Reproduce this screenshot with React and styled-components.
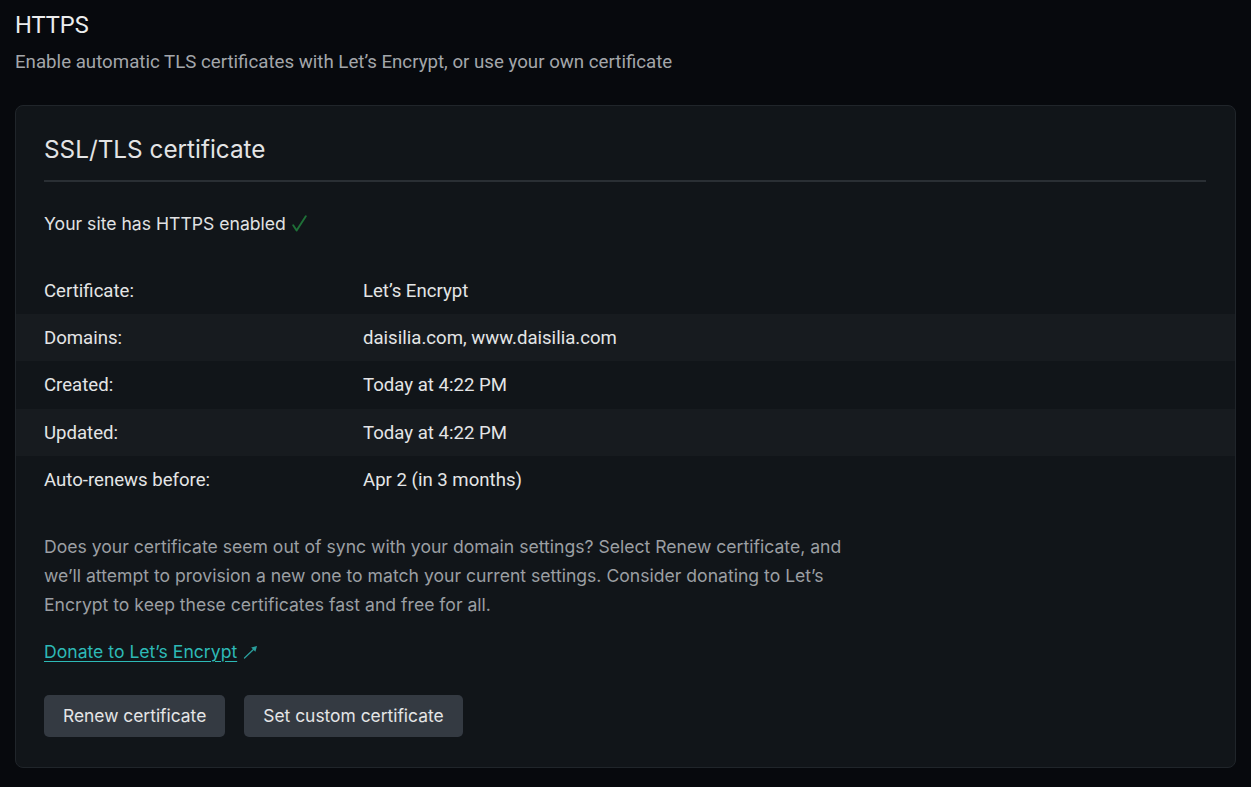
import React from "react";
import styled, { createGlobalStyle } from "styled-components";

const Global = createGlobalStyle`
  html, body { margin: 0; padding: 0; background: #07090d; }
  body { font-family: Inter, "Noto Sans", sans-serif; color: #e6e7e8; }
  * { box-sizing: border-box; }
`;

const Page = styled.div`
  padding: 8px 15px 20px 15px;
  min-height: 787px;
  background: #07090d;
`;

const PageTitle = styled.h1`
  margin: 0;
  font-family: Roboto, "Liberation Sans", sans-serif;
  font-weight: 400;
  font-size: 23.6px;
  line-height: 34px;
  color: #eceded;
`;

const PageSub = styled.p`
  margin: 6px 0 0 0;
  font-family: Roboto, "Liberation Sans", sans-serif;
  font-size: 18.7px;
  line-height: 28px;
  color: #a3a6aa;
`;

const Card = styled.section`
  margin-top: 29px;
  background: #111519;
  border: 1px solid #20252a;
  border-radius: 8px;
  padding: 23px 0 30px 0;
`;

const Inset = styled.div`
  padding: 0 29px 0 28px;
`;

const CardTitle = styled.h2`
  margin: 0;
  font-weight: 400;
  font-size: 24.3px;
  line-height: 40px;
  color: #e3e4e5;
  padding-bottom: 11px;
  border-bottom: 2px solid #2a2f34;
`;

const Status = styled.p`
  margin: 28px 0 0 0;
  font-size: 17.6px;
  line-height: 28px;
  color: #e1e2e3;
  display: flex;
  align-items: center;
  gap: 6px;
`;

const CheckIcon = styled.svg`
  width: 15px;
  height: 17px;
  flex: none;
  margin-top: -1px;
`;

const Table = styled.div`
  margin-top: 29px;
  display: flex;
  flex-direction: column;
`;

const Row = styled.div`
  display: grid;
  grid-template-columns: 319px 1fr;
  align-items: center;
  height: ${(p) => (p.$tall ? 48 : 47)}px;
  padding-left: 28px;
  background: ${(p) => (p.$striped ? "#171b1f" : "transparent")};
  font-family: Roboto, "Liberation Sans", sans-serif;
  font-size: 18.6px;
  color: #e4e5e6;
`;

const Cell = styled.span``;

const Body = styled.p`
  margin: 28px 0 0 0;
  max-width: 830px;
  font-size: 17.6px;
  line-height: 29px;
  color: #9b9fa3;
`;

const LinkLine = styled.p`
  margin: 19px 0 0 0;
  font-size: 17.6px;
  line-height: 28px;
  display: flex;
  align-items: center;
  gap: 6px;
`;

const Link = styled.a`
  color: #2db9b6;
  text-decoration: underline;
  text-underline-offset: 3px;
  text-decoration-thickness: 1px;
`;

const ArrowIcon = styled.svg`
  width: 15px;
  height: 14px;
  flex: none;
`;

const Buttons = styled.div`
  display: flex;
  gap: 19px;
  margin-top: 29px;
`;

const Button = styled.button`
  height: 42px;
  padding: 0 19px 2px 19px;
  border: none;
  border-radius: 5px;
  background: #343a42;
  color: #e4e5e6;
  font-family: Inter, "Noto Sans", sans-serif;
  font-size: 17.4px;
  cursor: pointer;
`;

const rows = [
  ["Certificate:", "Let\u2019s Encrypt"],
  ["Domains:", "daisilia.com, www.daisilia.com"],
  ["Created:", "Today at 4:22 PM"],
  ["Updated:", "Today at 4:22 PM"],
  ["Auto-renews before:", "Apr 2 (in 3 months)"],
];

export default function App() {
  return (
    <>
      <Global />
      <Page>
        <PageTitle>HTTPS</PageTitle>
        <PageSub>Enable automatic TLS certificates with Let’s Encrypt, or use your own certificate</PageSub>
        <Card>
          <Inset>
            <CardTitle>SSL/TLS certificate</CardTitle>
            <Status>
              <span>Your site has HTTPS enabled</span>
              <CheckIcon viewBox="0 0 15 17" aria-hidden="true">
                <path d="M1.2 10.2 L4.6 15.6 L13.8 1.2" fill="none" stroke="#1f7038" strokeWidth="1.9" strokeLinecap="round" strokeLinejoin="round" />
              </CheckIcon>
            </Status>
          </Inset>
          <Table>
            {rows.map(([k, v], i) => (
              <Row key={k} $striped={i % 2 === 1} $tall={i % 2 === 0 && i > 0}>
                <Cell>{k}</Cell>
                <Cell>{v}</Cell>
              </Row>
            ))}
          </Table>
          <Inset>
            <Body>
              Does your certificate seem out of sync with your domain settings? Select Renew certificate, and we’ll
              attempt to provision a new one to match your current settings. Consider donating to Let’s Encrypt to keep
              these certificates fast and free for all.
            </Body>
            <LinkLine>
              <Link href="#">Donate to Let’s Encrypt</Link>
              <ArrowIcon viewBox="0 0 15 14" aria-hidden="true">
                <path d="M1.5 13 L12 3" fill="none" stroke="#2a9e9c" strokeWidth="1.3" strokeLinecap="round" />
                <path d="M14 1 L8.2 2.6 L12.4 6.8 Z" fill="#2a9e9c" />
              </ArrowIcon>
            </LinkLine>
            <Buttons>
              <Button>Renew certificate</Button>
              <Button>Set custom certificate</Button>
            </Buttons>
          </Inset>
        </Card>
      </Page>
    </>
  );
}
